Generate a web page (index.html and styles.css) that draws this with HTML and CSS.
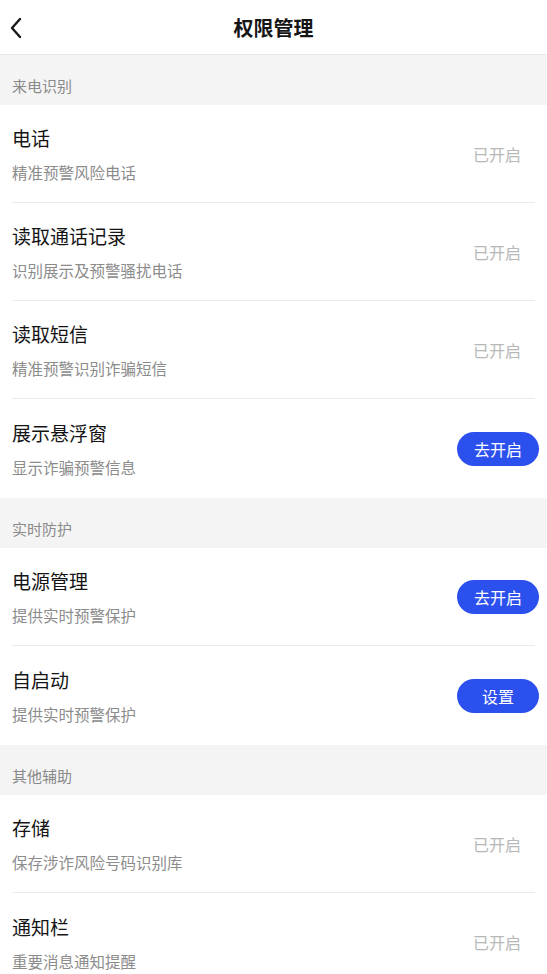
FILE: index.html
```html
<!DOCTYPE html>
<html lang="zh-CN">
<head>
<meta charset="utf-8">
<title>权限管理</title>
<link rel="stylesheet" href="styles.css">
</head>
<body>
<header class="topbar">
  <span class="back">
    <svg width="14" height="22" viewBox="0 0 14 22"><path d="M11 2 L3 11 L11 20" fill="none" stroke="#1a1a1a" stroke-width="2.4" stroke-linecap="round" stroke-linejoin="round"/></svg>
  </span>
  <h1 class="page-title">权限管理</h1>
</header>

<section class="group">
  <div class="group-title">来电识别</div>
  <ul class="list">
    <li class="item"><div class="text"><div class="title">电话</div><div class="desc">精准预警风险电话</div></div><span class="status">已开启</span></li>
    <li class="item"><div class="text"><div class="title">读取通话记录</div><div class="desc">识别展示及预警骚扰电话</div></div><span class="status">已开启</span></li>
    <li class="item"><div class="text"><div class="title">读取短信</div><div class="desc">精准预警识别诈骗短信</div></div><span class="status">已开启</span></li>
    <li class="item"><div class="text"><div class="title">展示悬浮窗</div><div class="desc">显示诈骗预警信息</div></div><button class="btn">去开启</button></li>
  </ul>
</section>

<section class="group">
  <div class="group-title">实时防护</div>
  <ul class="list">
    <li class="item"><div class="text"><div class="title">电源管理</div><div class="desc">提供实时预警保护</div></div><button class="btn">去开启</button></li>
    <li class="item"><div class="text"><div class="title">自启动</div><div class="desc">提供实时预警保护</div></div><button class="btn">设置</button></li>
  </ul>
</section>

<section class="group">
  <div class="group-title">其他辅助</div>
  <ul class="list">
    <li class="item"><div class="text"><div class="title">存储</div><div class="desc">保存涉诈风险号码识别库</div></div><span class="status">已开启</span></li>
    <li class="item"><div class="text"><div class="title">通知栏</div><div class="desc">重要消息通知提醒</div></div><span class="status">已开启</span></li>
  </ul>
</section>
</body>
</html>
```

FILE: styles.css
```css
* { box-sizing: border-box; }
html, body { margin: 0; padding: 0; }
body {
  width: 547px;
  background: #ffffff;
  font-family: "Noto Sans CJK SC", "Noto Sans", sans-serif;
  color: #111;
}
.topbar {
  height: 55px;
  display: flex;
  align-items: center;
  justify-content: center;
  position: relative;
  border-bottom: 1px solid #e8e8e8;
  background: #fff;
}
.back {
  position: absolute;
  left: 9px;
  top: 17px;
  display: flex;
}
.page-title {
  margin: 0;
  font-size: 20px;
  font-weight: 700;
  line-height: 28px;
  color: #151515;
  padding-top: 2px;
}
.group-title {
  height: 50px;
  background: #f4f4f4;
  font-size: 15px;
  color: #8a8a8a;
  padding: 20px 12px 0;
  line-height: 22px;
}
.list {
  list-style: none;
  margin: 0;
  padding: 0 12px 1px;
  background: #fff;
}
.item {
  height: 98px;
  display: flex;
  align-items: center;
  justify-content: space-between;
  border-bottom: 1px solid #ebebeb;
}
.item:last-child { border-bottom: none; }
.text {
  display: flex;
  flex-direction: column;
  gap: 10px;
  padding-top: 1px;
}
.title {
  font-size: 19px;
  line-height: 26px;
  color: #141414;
}
.desc {
  font-size: 15.5px;
  line-height: 22px;
  color: #8c8c8c;
}
.status {
  font-size: 16px;
  color: #b8b8b8;
  margin-right: 14px;
}
.btn {
  width: 82px;
  height: 34px;
  border: none;
  border-radius: 17px;
  background: #2c50ee;
  color: #fff;
  font-family: inherit;
  font-size: 16px;
  padding: 0;
  margin-right: -4px;
  margin-top: 1px;
}
```
